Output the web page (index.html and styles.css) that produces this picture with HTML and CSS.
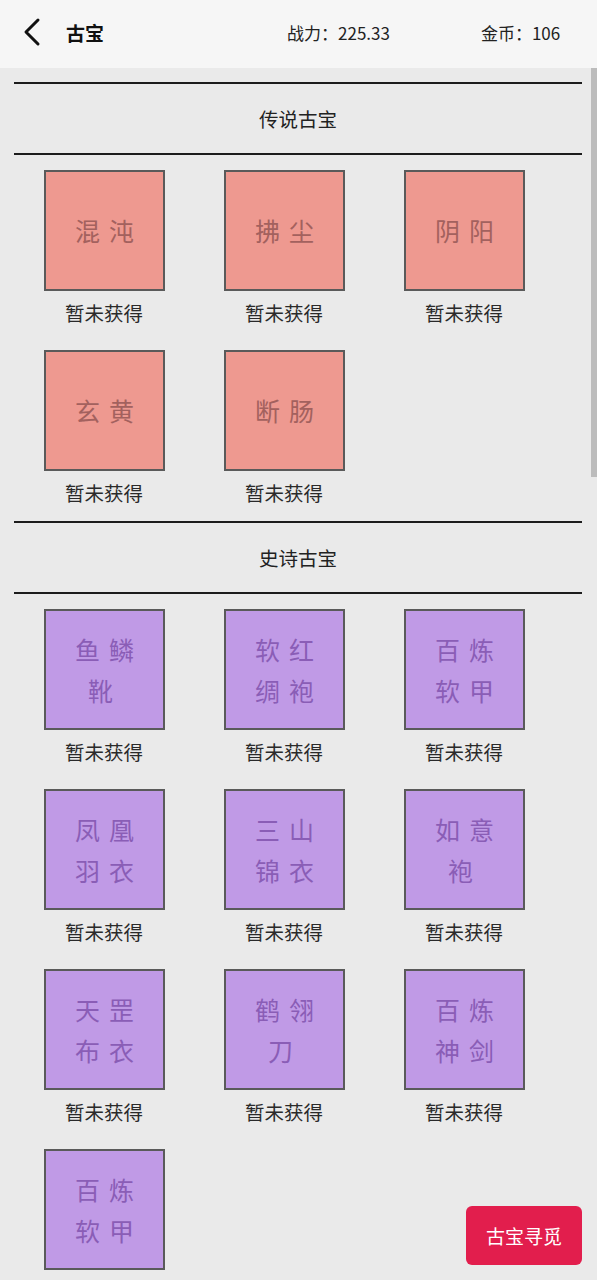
FILE: index.html
```html
<!DOCTYPE html>
<html lang="zh">
<head>
<meta charset="utf-8">
<title>古宝</title>
<link rel="stylesheet" href="styles.css">
</head>
<body>
<div class="page">
  <header class="topbar">
    <div class="back">
      <svg width="20" height="30" viewBox="0 0 20 30"><path d="M16 3 L4 15 L16 27" fill="none" stroke="#111" stroke-width="3" stroke-linecap="round" stroke-linejoin="round"/></svg>
    </div>
    <div class="title">古宝</div>
    <div class="stat power">战力：225.33</div>
    <div class="stat gold">金币：106</div>
  </header>
  <main class="content">
    <div class="rule"></div>
    <div class="section-title">传说古宝</div>
    <div class="rule"></div>
    <div class="grid">
      <div class="cell"><div class="card legend"><div class="ln"><span>混</span><span>沌</span></div></div><div class="label">暂未获得</div></div>
      <div class="cell"><div class="card legend"><div class="ln"><span>拂</span><span>尘</span></div></div><div class="label">暂未获得</div></div>
      <div class="cell"><div class="card legend"><div class="ln"><span>阴</span><span>阳</span></div></div><div class="label">暂未获得</div></div>
      <div class="cell"><div class="card legend"><div class="ln"><span>玄</span><span>黄</span></div></div><div class="label">暂未获得</div></div>
      <div class="cell"><div class="card legend"><div class="ln"><span>断</span><span>肠</span></div></div><div class="label">暂未获得</div></div>
    </div>
    <div class="rule sep"></div>
    <div class="section-title">史诗古宝</div>
    <div class="rule"></div>
    <div class="grid">
      <div class="cell"><div class="card epic"><div class="ln"><span>鱼</span><span>鳞</span></div><div class="ln single"><span>靴</span></div></div><div class="label">暂未获得</div></div>
      <div class="cell"><div class="card epic"><div class="ln"><span>软</span><span>红</span></div><div class="ln"><span>绸</span><span>袍</span></div></div><div class="label">暂未获得</div></div>
      <div class="cell"><div class="card epic"><div class="ln"><span>百</span><span>炼</span></div><div class="ln"><span>软</span><span>甲</span></div></div><div class="label">暂未获得</div></div>
      <div class="cell"><div class="card epic"><div class="ln"><span>凤</span><span>凰</span></div><div class="ln"><span>羽</span><span>衣</span></div></div><div class="label">暂未获得</div></div>
      <div class="cell"><div class="card epic"><div class="ln"><span>三</span><span>山</span></div><div class="ln"><span>锦</span><span>衣</span></div></div><div class="label">暂未获得</div></div>
      <div class="cell"><div class="card epic"><div class="ln"><span>如</span><span>意</span></div><div class="ln single"><span>袍</span></div></div><div class="label">暂未获得</div></div>
      <div class="cell"><div class="card epic"><div class="ln"><span>天</span><span>罡</span></div><div class="ln"><span>布</span><span>衣</span></div></div><div class="label">暂未获得</div></div>
      <div class="cell"><div class="card epic"><div class="ln"><span>鹤</span><span>翎</span></div><div class="ln single"><span>刀</span></div></div><div class="label">暂未获得</div></div>
      <div class="cell"><div class="card epic"><div class="ln"><span>百</span><span>炼</span></div><div class="ln"><span>神</span><span>剑</span></div></div><div class="label">暂未获得</div></div>
      <div class="cell"><div class="card epic"><div class="ln"><span>百</span><span>炼</span></div><div class="ln"><span>软</span><span>甲</span></div></div></div>
    </div>
  </main>
  <div class="scrollbar"></div>
  <button class="seek">古宝寻觅</button>
</div>
</body>
</html>
```
FILE: styles.css
```css
* { box-sizing: border-box; }
html, body { margin: 0; padding: 0; }
body {
  font-family: "Noto Sans CJK SC", "Noto Sans", sans-serif;
  background: #eaeaea;
  color: #222;
}
.page {
  position: relative;
  width: 597px;
  height: 1280px;
  overflow: hidden;
  background: #eaeaea;
}
.topbar {
  height: 68px;
  background: #f6f6f6;
  display: flex;
  align-items: center;
  padding-left: 22px;
}
.back { width: 20px; height: 30px; display: flex; margin-top: -4px; }
.title {
  margin-left: 24px;
  font-size: 19px;
  font-weight: 700;
  color: #111;
  margin-top: -4px;
}
.stat {
  font-size: 17px;
  color: #222;
  margin-top: -4px;
}
.power { margin-left: 183px; }
.gold { margin-left: 91px; }
.content {
  padding: 14px 15px 0 14px;
}
.rule {
  height: 2px;
  background: #1c1c1c;
}
.rule.sep { margin-top: 14px; }
.section-title {
  height: 69px;
  display: flex;
  align-items: center;
  justify-content: center;
  font-size: 19.5px;
  color: #222;
}
.grid {
  display: grid;
  grid-template-columns: repeat(3, 180px);
  row-gap: 23px;
  margin-top: 15px;
}
.cell {
  display: flex;
  flex-direction: column;
  align-items: center;
}
.card {
  width: 121px;
  height: 121px;
  border: 2px solid #5a5a5a;
  display: flex;
  flex-direction: column;
  align-items: center;
  justify-content: center;
  font-size: 25px;
  margin-left: 1px;
}
.card.legend { background: #ee9990; color: #a3615e; }
.card.epic { background: #c09ae6; color: #8a5db6; }
.ln {
  display: flex;
  gap: 9px;
  line-height: 41px;
  height: 41px;
}
.ln.single { margin-right: 8px; }
.label {
  margin-top: 8px;
  height: 28px;
  line-height: 28px;
  font-size: 19.5px;
  color: #2a2a2a;
}
.scrollbar {
  position: absolute;
  right: 0;
  top: 68px;
  width: 6px;
  height: 409px;
  background: #bcbcbc;
}
.seek {
  position: absolute;
  right: 15px;
  bottom: 15px;
  width: 116px;
  height: 59px;
  border: none;
  border-radius: 6px;
  background: #e21e4d;
  color: #fff;
  font-family: "Noto Sans CJK SC", sans-serif;
  font-size: 19px;
  padding: 0;
}
```
